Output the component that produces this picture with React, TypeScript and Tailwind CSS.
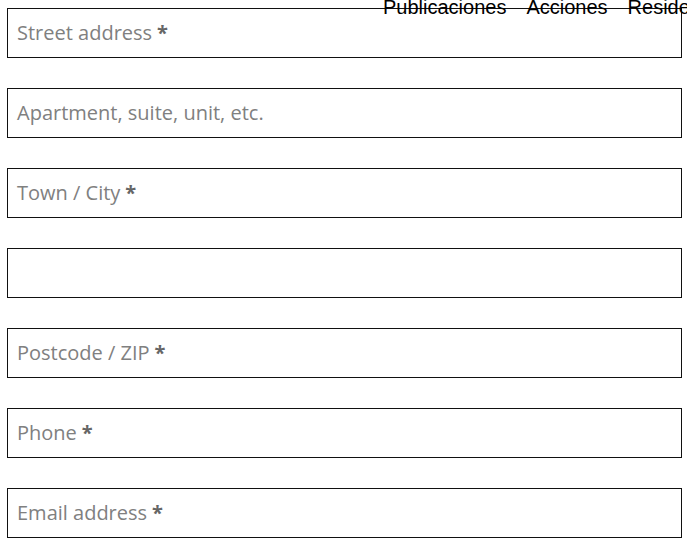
const fields = [
  { label: "Street address", required: true },
  { label: "Apartment, suite, unit, etc.", required: false },
  { label: "Town / City", required: true },
  { label: "", required: false },
  { label: "Postcode / ZIP", required: true },
  { label: "Phone", required: true },
  { label: "Email address", required: true },
];

export default function App() {
  return (
    <div className="relative w-[687px] h-[554px] overflow-hidden bg-white">
      {/* Checkout fields */}
      <div className="flex flex-col gap-[30px] pt-[8px] pl-[7px]">
        {fields.map((f, i) => (
          <div
            key={i}
            className="flex items-center w-[675px] h-[50px] border border-[#111] pl-[9px] text-[20px] text-[#808080] font-['Open_Sans',sans-serif]"
          >
            {f.label}
            {f.required && <span className="ml-[5px] font-bold text-[#666]">*</span>}
          </div>
        ))}
      </div>

      {/* Header nav bleeding over the form */}
      <nav className="absolute top-[-8px] left-[383px] flex gap-[20px] whitespace-nowrap text-[20px] text-black font-['Liberation_Sans',Arial,sans-serif]">
        <span>Publicaciones</span>
        <span>Acciones</span>
        <span>Residencias</span>
      </nav>
    </div>
  );
}
